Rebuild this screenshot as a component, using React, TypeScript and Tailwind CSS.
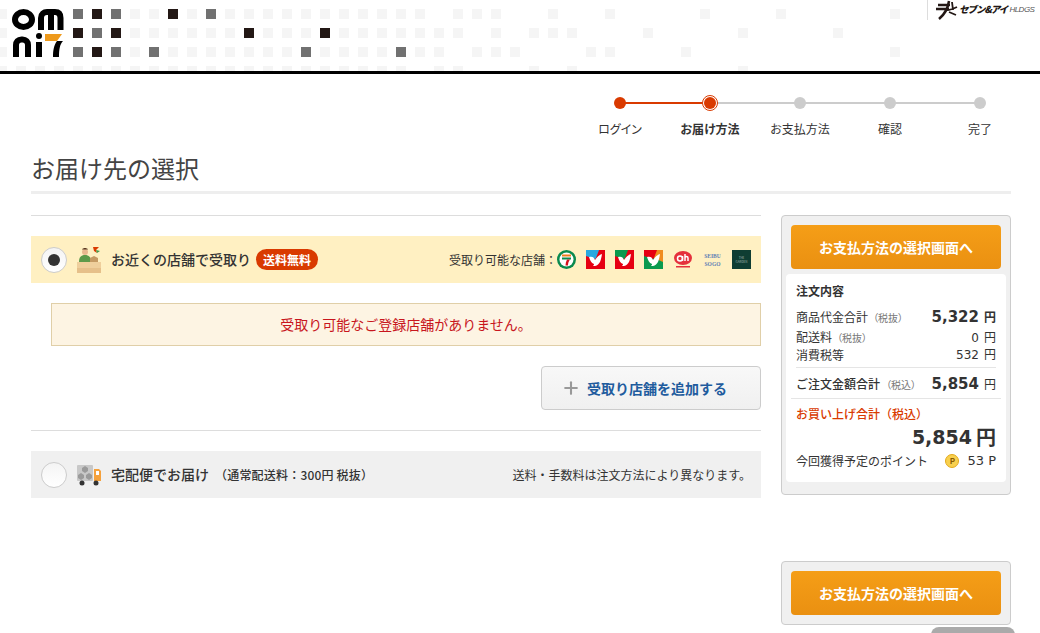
import { FC, ReactNode } from 'react'
import { Plus } from 'lucide-react'

const C_LIGHT = '#f5f5f5'
const C_GRAY = '#717171'
const C_BLACK = '#231815'

// col -> colour, x = col * 19 - 3
const makeRow = (light: number[], gray: number[], black: number[]) => [
  ...light.map((c) => [c, C_LIGHT] as const),
  ...gray.map((c) => [c, C_GRAY] as const),
  ...black.map((c) => [c, C_BLACK] as const),
]
const range = (a: number, b: number) =>
  Array.from({ length: b - a + 1 }, (_, i) => a + i)

const dotRows = [
  {
    y: 9,
    dots: makeRow(
      [0, 7, 8, 10, ...range(12, 22), 24, 25, 26, 29, 32, 37, 41, 47],
      [4, 6, 11],
      [5, 9],
    ),
  },
  {
    y: 28,
    dots: makeRow(
      [0, ...range(7, 12), 14, 15, 16, ...range(18, 24), 26, 28, 29, 30, 34, 39, 44],
      [5],
      [4, 6, 13, 17],
    ),
  },
  {
    y: 47,
    dots: makeRow(
      [0, 7, ...range(9, 15), ...range(17, 20), 22, 23, 25, 26, 27, 31, 32, 36, 47],
      [4, 6, 8, 16, 21],
      [5],
    ),
  },
  {
    y: 66,
    dots: makeRow([...range(0, 21), 23, 24, 28, 30, 39], [], []),
  },
]

const HeaderPattern: FC = () => (
  <svg width="1040" height="71" viewBox="0 0 1040 71" className="block">
    {dotRows.map((row) =>
      row.dots.map(([col, fill]) => (
        <rect
          key={`${row.y}-${col}`}
          x={col * 19 - 3}
          y={row.y}
          width="10"
          height={row.y === 66 ? 5 : 10}
          fill={fill}
        />
      )),
    )}
    {/* omni7 logo */}
    <g fill="none" stroke="#000" strokeWidth="6">
      <ellipse cx="23.500" cy="19.500" rx="8.500" ry="7.500" />
      <path d="M41 30V18c0-4 3-6 6-6h8c4 0 5.500 2.500 5.500 6v12M51 12v18" />
      <path d="M16 57V45c0-3 2-5.500 5.500-5.500h1c3.500 0 5.500 2.500 5.500 5.500v12" />
      <path d="M39 42v15" />
    </g>
    <circle cx="39" cy="36" r="3" fill="#000" />
    <path d="M45 34h17l-5 7H45z" fill="#ee9a1c" />
    <path d="M57 41h6c-3 3-4 8-4 16h-6c0-7 1-12 4-16z" fill="#000" />
  </svg>
)

const SevenMark: FC = () => (
  <svg width="22" height="20" viewBox="0 0 22 20" className="shrink-0">
    <path d="M2 5h12M0 9h13M13 1c-1 7-4 13-10 18" fill="none" stroke="#231815" strokeWidth="2.500" />
    <path d="M11 10c4 0 8-2 10-3M13 12l7 3M16 2l1 8" fill="none" stroke="#231815" strokeWidth="1.800" />
  </svg>
)

const steps = [
  { label: 'ログイン', done: true },
  { label: 'お届け方法', done: true, current: true },
  { label: 'お支払方法' },
  { label: '確認' },
  { label: '完了' },
]

const Stepper: FC = () => (
  <div className="flex justify-end pr-[15px] pt-[22px]">
    {steps.map((s, i) => (
      <div key={s.label} className="relative flex w-[90px] flex-col items-center">
        {i > 0 && (
          <div
            className={`absolute right-1/2 top-[6px] h-[2px] w-[90px] ${s.done ? 'bg-[#d93a00]' : 'bg-[#cccccc]'}`}
          />
        )}
        {s.current ? (
          <div className="relative z-10 -my-px flex h-[16px] w-[16px] items-center justify-center rounded-full border border-[#d93a00] bg-white">
            <div className="h-[12px] w-[12px] rounded-full bg-[#d93a00]" />
          </div>
        ) : (
          <div
            className={`relative z-10 my-px h-[12px] w-[12px] rounded-full ${s.done ? 'bg-[#d93a00]' : 'bg-[#cccccc]'}`}
          />
        )}
        <div
          className={`mt-[10px] text-[12px] leading-[18px] text-[#333333] [font-feature-settings:'palt'] ${s.current ? 'font-bold' : ''}`}
        >
          {s.label}
        </div>
      </div>
    ))}
  </div>
)

const Radio: FC<{ checked?: boolean }> = ({ checked }) => (
  <div className="flex h-[26px] w-[26px] shrink-0 items-center justify-center rounded-full border border-[#cccccc] bg-gradient-to-b from-[#f4f4f4] to-white">
    {checked && <div className="h-[12px] w-[12px] rounded-full bg-[#333333]" />}
  </div>
)

const StoreIcon: FC = () => (
  <svg width="24" height="27" viewBox="0 0 24 27" className="shrink-0">
    <circle cx="8" cy="6" r="3" fill="#e9b88f" />
    <path d="M5 3.500c1-2 5-2 6 0z" fill="#5a3a22" />
    <path d="M2 16c0-5 2-7 6-7s6 2 6 7z" fill="#5d9a4a" />
    <path d="M16 1h6l-3 3 1 3-3-2z" fill="#d93a00" />
    <path d="M19 4l4 1-3 2z" fill="#3f9a4a" />
    <path d="M13 12l4-2 4 2v5h-8z" fill="#c49a63" />
    <rect x="0" y="16" width="24" height="6" fill="#efcf9c" />
    <rect x="0" y="22" width="24" height="5" fill="#e6c08a" />
  </svg>
)

const TruckIcon: FC = () => (
  <svg width="24" height="22" viewBox="0 0 24 22" className="shrink-0">
    <rect x="0" y="1" width="16" height="16" rx="1" fill="#c8c8c8" />
    <path d="M8 2l3 2v3L8 9 5 7V4zM4 9l3 2v3l-3 2-3-2v-3zM12 9l3 2v3l-3 2-3-2v-3z" fill="#9a9a9a" />
    <path d="M17 5h5l2 2v10h-7z" fill="#f5a13c" />
    <rect x="19" y="7" width="3" height="4" fill="#fff" />
    <circle cx="5" cy="19" r="2.500" fill="#333" />
    <circle cx="19" cy="19" r="2.500" fill="#333" />
  </svg>
)

const Bird: FC<{ tl: string; tr: string; bg: string }> = ({ tl, tr, bg }) => (
  <svg width="19" height="19" viewBox="0 0 19 19" className="shrink-0">
    <rect width="19" height="19" fill={bg} />
    <path d="M0 0h19L9 9 0 6z" fill={tl} />
    <path d="M13 0h6v12l-9-4z" fill={tr} />
    <path d="M3 7c3-1 5 0 6 3 2-3 4-5 7-6-1 6-2 11-7 12H7c1-1 1-2 1-2-3-1-4-4-5-7z" fill="#fff" />
  </svg>
)

const StoreLogos: FC = () => (
  <div className="flex items-center gap-[10px]">
    <svg width="19" height="19" viewBox="0 0 19 19" className="shrink-0">
      <circle cx="9.500" cy="9.500" r="9.500" fill="#0a8a4e" />
      <circle cx="9.500" cy="9.500" r="7" fill="#fff" />
      <rect x="5" y="4.500" width="9" height="2" fill="#ee7b1c" />
      <rect x="5" y="7.500" width="9" height="2" fill="#0a8a4e" />
      <path d="M10 9.500h3c-1.500 2-2 4-2 6H8.500c0-2 .5-4 1.500-6z" fill="#d5121e" />
    </svg>
    <Bird bg="#e60012" tl="#29a8e0" tr="#e60012" />
    <Bird bg="#e60012" tl="#0a9a4e" tr="#e60012" />
    <Bird bg="#0a9a4e" tl="#e60012" tr="#f08c1e" />
    <svg width="20" height="19" viewBox="0 0 20 19" className="shrink-0">
      <ellipse cx="10" cy="8" rx="9" ry="7" fill="#e5303c" />
      <circle cx="7" cy="8.500" r="2.500" fill="none" stroke="#fff" strokeWidth="1.500" />
      <path d="M9.500 6v5M12 4v7M12 8c0-2 3-2 3 0v3" fill="none" stroke="#fff" strokeWidth="1.500" />
      <rect x="3" y="16" width="14" height="1.500" fill="#e5303c" />
    </svg>
    <div className="flex w-[19px] shrink-0 flex-col items-center text-[5.500px] font-bold leading-[8px] text-[#5f7fb5] [font-family:'Liberation_Serif',serif]">
      <span>SEIBU</span>
      <span>SOGO</span>
    </div>
    <div className="flex h-[19px] w-[19px] shrink-0 flex-col items-center justify-center bg-[#0f3d33] text-[3px] leading-[4px] text-[#9db5ac]">
      <span>THE</span>
      <span>GARDEN</span>
    </div>
  </div>
)

const Num: FC<{ className?: string; children: ReactNode }> = ({ className, children }) => (
  <span className={`[font-family:'DejaVu_Sans',sans-serif] ${className ?? ''}`}>{children}</span>
)

const PayButton: FC = () => (
  <div className="flex h-[44px] items-center justify-center rounded-[4px] bg-gradient-to-b from-[#f59e17] to-[#ea9011] text-[14px] font-bold text-white">
    お支払方法の選択画面へ
  </div>
)

const Tax: FC<{ children: ReactNode; className?: string }> = ({ children, className }) => (
  <span className={`text-[10px] font-normal text-[#777777] [font-feature-settings:'palt'] ${className ?? ''}`}>
    {children}
  </span>
)

const Summary: FC = () => (
  <div className="mt-[5px] rounded-[4px] bg-white px-[5px] pb-[11px] pt-[7px] text-[12px] text-[#333333]">
    <div className="px-[5px]">
      <div className="font-bold leading-[20px]">注文内容</div>
      <div className="mt-[5px] flex h-[22px] items-center justify-between">
        <div>
          商品代金合計
          <Tax className="ml-[5px]">（税抜）</Tax>
        </div>
        <div className="flex items-baseline gap-[5px]">
          <Num className="text-[15px] font-bold">5,322</Num>
          <span className="font-bold">円</span>
        </div>
      </div>
      <div className="flex h-[18px] items-center justify-between">
        <div>
          配送料
          <Tax className="ml-[5px]">（税抜）</Tax>
        </div>
        <div className="flex items-baseline gap-[5px]">
          <Num>0</Num>
          <span>円</span>
        </div>
      </div>
      <div className="flex h-[17px] items-center justify-between">
        <div>消費税等</div>
        <div className="flex items-baseline gap-[5px]">
          <Num>532</Num>
          <span>円</span>
        </div>
      </div>
      <div className="mt-[4px] flex h-[31px] items-center justify-between border-t border-[#e5e5e5] pt-[2px]">
        <div className="font-medium">
          ご注文金額合計
          <Tax className="ml-[6px]">（税込）</Tax>
        </div>
        <div className="flex items-baseline gap-[5px]">
          <Num className="text-[15px] font-bold">5,854</Num>
          <span>円</span>
        </div>
      </div>
    </div>
    <div className="border-t border-[#e5e5e5] px-[5px]">
      <div className="pt-[6px] font-medium leading-[18px] text-[#d93a00]">お買い上げ合計（税込）</div>
      <div className="flex h-[28px] items-center justify-end gap-[4px] font-bold">
        <Num className="text-[19px]">5,854</Num>
        <span className="text-[20px]">円</span>
      </div>
      <div className="flex h-[20px] items-center justify-between">
        <span>今回獲得予定のポイント</span>
        <div className="flex items-center">
          <div className="mr-[8px] flex h-[14px] w-[14px] items-center justify-center rounded-full border border-[#e3a91c] bg-[#f8d04e] text-[8px] font-bold text-[#8a5a00]">
            P
          </div>
          <Num className="text-[13px]">53 P</Num>
        </div>
      </div>
    </div>
  </div>
)

export default function App() {
  return (
    <div className="h-[633px] w-[1040px] overflow-hidden bg-white text-[#333333] [font-family:'Noto_Sans_CJK_JP',sans-serif]">
      <header className="relative h-[74px] border-b-[3px] border-black">
        <HeaderPattern />
        <div className="absolute right-0 top-0 flex h-[20px] w-[113px] items-center border-l border-[#dddddd] pl-[8px]">
          <SevenMark />
          <span className="ml-[1px] whitespace-nowrap text-[9.500px] font-black italic leading-none tracking-[-1px] text-[#231815]">
            セブン&amp;アイ
          </span>
          <span className="ml-[2px] text-[8px] italic leading-none tracking-[-0.5px] text-[#555555] [font-family:'Liberation_Sans',sans-serif]">
            HLDGS
          </span>
        </div>
      </header>

      <Stepper />

      <div className="pl-[31px] pr-[29px]">
        <h1 className="mt-[4px] h-[52px] border-b-[3px] border-[#eeeeee] text-[24px] font-normal leading-[52px] text-[#444444]">
          お届け先の選択
        </h1>

        <div className="mt-[21px] flex gap-[20px]">
          <main className="w-[730px]">
            <div className="h-[21px] border-t border-[#dddddd]" />
            <div className="flex h-[47px] items-center bg-[#fff0c2] pl-[10px] pr-[10px]">
              <Radio checked />
              <div className="ml-[10px]">
                <StoreIcon />
              </div>
              <div className="ml-[10px] text-[14px] font-medium">お近くの店舗で受取り</div>
              <div className="ml-[5px] flex h-[21px] w-[62px] items-center justify-center rounded-full bg-[#d93a00] text-[12px] font-bold text-white">
                送料無料
              </div>
              <div className="ml-auto whitespace-nowrap text-[12px]">受取り可能な店舗：</div>
              <StoreLogos />
            </div>

            <div className="ml-[20px] mt-[20px] flex h-[43px] items-center justify-center border border-[#e0cfa8] bg-[#fdf4e3] text-[14px] text-[#c8161d]">
              受取り可能なご登録店舗がありません。
            </div>

            <div className="mt-[20px] flex justify-end">
              <div className="flex h-[44px] w-[220px] items-center justify-center rounded-[4px] border border-[#cccccc] bg-gradient-to-b from-[#f8f8f8] to-[#f0f0f0] pr-[14px]">
                <Plus size={20} strokeWidth={2.5} className="text-[#999999]" />
                <span className="ml-[6px] text-[14px] font-bold text-[#1f5c9e]">受取り店舗を追加する</span>
              </div>
            </div>

            <div className="mt-[20px] h-[21px] border-t border-[#dddddd]" />
            <div className="flex h-[47px] items-center bg-[#f0f0f0] pl-[10px] pr-[10px]">
              <Radio />
              <div className="ml-[10px]">
                <TruckIcon />
              </div>
              <div className="ml-[10px] text-[14px] font-medium">宅配便でお届け</div>
              <div className="ml-[6px] text-[12px] font-medium tracking-[0.2px]">（通常配送料：300円 税抜）</div>
              <div className="ml-auto text-[12px]">送料・手数料は注文方法により異なります。</div>
            </div>
          </main>

          <aside className="w-[230px]">
            <div className="h-[280px] rounded-[4px] border border-[#cccccc] bg-[#f0f0f0] px-[4px] pt-[9px]">
              <div className="px-[5px]">
                <PayButton />
              </div>
              <Summary />
            </div>
            <div className="mt-[66px] rounded-[4px] border border-[#cccccc] bg-[#f0f0f0] px-[9px] py-[9px]">
              <PayButton />
            </div>
            <div className="ml-[150px] mt-[2px] h-[20px] w-[84px] rounded-t-[8px] bg-[#aaaaaa]" />
          </aside>
        </div>
      </div>
    </div>
  )
}
